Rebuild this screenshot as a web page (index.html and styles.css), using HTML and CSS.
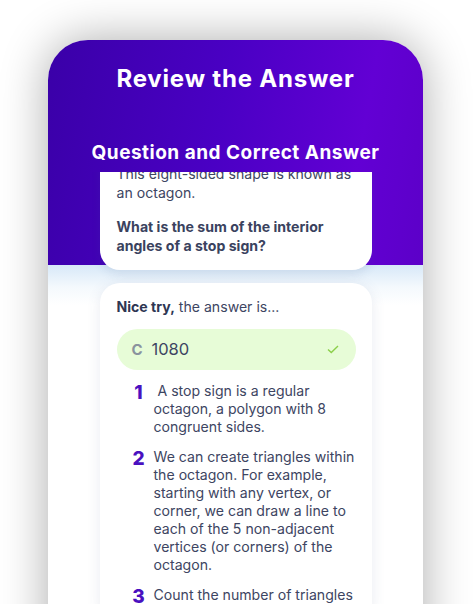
FILE: index.html
```
<!DOCTYPE html>
<html>
<head>
<meta charset="utf-8">
<link rel="stylesheet" href="styles.css">
</head>
<body>
<div class="phone">
  <header class="header">
    <h1 class="title">Review the Answer</h1>
    <h2 class="subtitle">Question and Correct Answer</h2>
  </header>
  <div class="viewport">
    <section class="card question">
      <p class="q-text">This eight-sided shape is known as an octagon.</p>
      <p class="q-ask">What is the sum of the interior angles of a stop sign?</p>
    </section>
    <section class="card answer">
      <p class="verdict"><strong>Nice try,</strong> the answer is...</p>
      <div class="pill">
        <span class="letter">C</span>
        <span class="value">1080</span>
        <svg class="check" width="12" height="9" viewBox="0 0 12 9"><path d="M1 4.5 L4.3 7.6 L11 1" fill="none" stroke="#8ccf4a" stroke-width="1.4"/></svg>
      </div>
      <ol class="steps">
        <li class="step"><span class="num">1</span><span class="txt">&nbsp;A stop sign is a regular octagon, a polygon with 8 congruent sides.</span></li>
        <li class="step"><span class="num">2</span><span class="txt">We can create triangles within the octagon. For example, starting with any vertex, or corner, we can draw a line to each of the 5 non-adjacent vertices (or corners) of the octagon.</span></li>
        <li class="step"><span class="num">3</span><span class="txt">Count the number of triangles formed inside the octagon.</span></li>
      </ol>
    </section>
  </div>
</div>
</body>
</html>
```

FILE: styles.css
```
html, body {
  margin: 0;
  padding: 0;
  background: #fff;
  overflow: hidden;
}
body {
  width: 474px;
  height: 604px;
  font-family: Inter, "Noto Sans", sans-serif;
}
.phone {
  margin: 40px 0 0 48px;
  width: 375px;
  height: 620px;
  border-radius: 40px 40px 0 0;
  overflow: hidden;
  box-shadow: 0 0 48px rgba(0, 0, 0, 0.33);
  background:
    linear-gradient(100deg, #3a00a8 0%, #4a00c4 45%, #6200d4 80%, #5c00c8 100%) top left / 100% 225px no-repeat,
    linear-gradient(180deg, #d7e8f8 0px, #f4f9fd 22px, #ffffff 40px) 0 225px / 100% 100% no-repeat;
  display: flex;
  flex-direction: column;
}
.header {
  padding-top: 25px;
  text-align: center;
  color: #fff;
}
.title {
  margin: 0;
  font-size: 24px;
  line-height: 28px;
  font-weight: 700;
  letter-spacing: 0.8px;
}
.subtitle {
  margin: 49px 0 0;
  font-size: 19px;
  line-height: 22px;
  font-weight: 700;
  letter-spacing: 0.5px;
}
.viewport {
  margin-top: 8px;
  height: 500px;
  overflow: hidden;
  display: flex;
  flex-direction: column;
  align-items: center;
  gap: 13px;
  padding-bottom: 40px;
}
.card {
  width: 272px;
  box-sizing: border-box;
  background: #fff;
  border-radius: 20px;
  padding: 0 16px 0 17px;
  color: #3d4562;
  font-size: 14.1px;
  line-height: 18.5px;
}
.question {
  margin-top: -15px;
  padding-top: 8px;
  padding-bottom: 15px;
  border-radius: 0 0 20px 20px;
  box-shadow: 0 4px 10px rgba(60, 90, 140, 0.12);
}
.question p {
  margin: 0;
}
.q-ask {
  margin-top: 16px !important;
  font-weight: 700;
  color: #3a425e;
}
.answer {
  padding-top: 15px;
  box-shadow: 0 2px 14px rgba(70, 90, 140, 0.12);
}
.verdict {
  margin: 0;
  color: #3d4562;
}
.verdict strong {
  color: #2e3652;
}
.pill {
  margin-top: 12px;
  height: 41px;
  border-radius: 21px;
  background: #e7fcd7;
  display: flex;
  align-items: center;
  padding: 0 17px 0 15px;
}
.letter {
  color: #8a939e;
  font-weight: 700;
  font-size: 15px;
  width: 20px;
  padding-top: 2px;
}
.value {
  color: #3d4562;
  font-size: 16.5px;
  flex: 1;
}
.check {
  display: block;
}
.steps {
  list-style: none;
  margin: 12px 0 0;
  padding: 0;
  display: flex;
  flex-direction: column;
  gap: 12px;
  line-height: 18px;
}
.step {
  display: flex;
  gap: 8px;
}
.num {
  width: 14px;
  margin-left: 15px;
  flex: none;
  text-align: center;
  color: #4a10c0;
  font-weight: 800;
  font-size: 19px;
  line-height: 20px;
  padding-top: 1px;
}
.txt {
  flex: 1;
  color: #3d4562;
}
```
